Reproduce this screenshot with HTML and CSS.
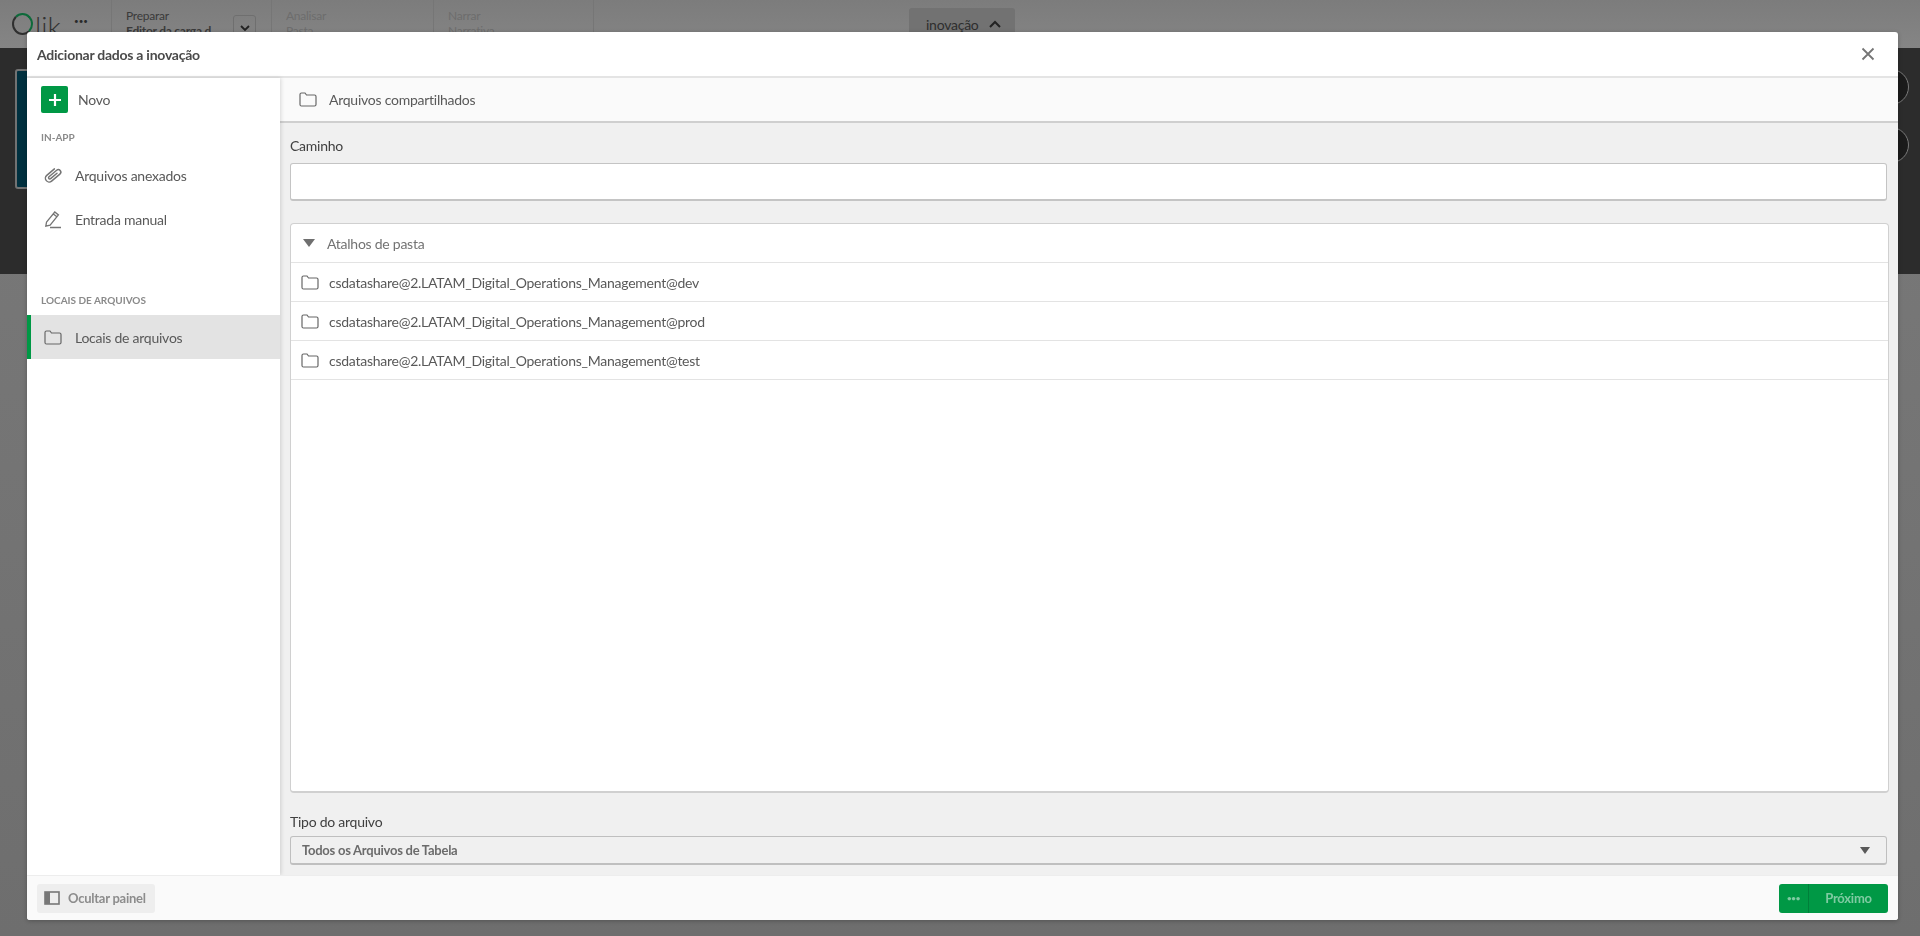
FILE: index.html
```html
<!DOCTYPE html>
<html lang="pt-BR">
<head>
<meta charset="utf-8">
<title>Adicionar dados a inovação</title>
<link rel="stylesheet" href="styles.css">
</head>
<body>
<div class="app">
  <header class="topbar">
    <div class="logo"><span class="logo-o"></span><span class="logo-lik">lik</span></div>
    <div class="more">•••</div>
    <div class="nav-item nav-prepare">
      <span class="nav-title">Preparar</span>
      <span class="nav-sub">Editor da carga d</span>
      <span class="nav-drop"><svg width="12" height="8" viewBox="0 0 12 8"><path d="M2 2l4 4 4-4" fill="none" stroke="#222" stroke-width="1.8"/></svg></span>
    </div>
    <div class="nav-item nav-analyse"><span class="nav-title faded">Analisar</span><span class="nav-sub faded">Pasta</span></div>
    <div class="nav-item nav-narrate"><span class="nav-title faded">Narrar</span><span class="nav-sub faded">Narrativa</span></div>
    <div class="app-name"><span>inovação</span><svg width="14" height="9" viewBox="0 0 14 9"><path d="M2 7l5-5 5 5" fill="none" stroke="#222" stroke-width="2"/></svg></div>
  </header>
  <section class="stage">
    <div class="stage-card"></div>
    <div class="stage-rings"><span class="ring"></span><span class="ring"></span></div>
  </section>
</div>

<div class="dialog">
  <div class="dialog-head">
    <h1 class="dialog-title">Adicionar dados a inovação</h1>
    <svg class="close" width="14" height="14" viewBox="0 0 14 14"><path d="M1.5 1.5l11 11M12.5 1.5l-11 11" stroke="#757575" stroke-width="1.8" fill="none"/></svg>
  </div>
  <div class="dialog-body">
    <aside class="side">
      <div class="new-row">
        <span class="new-btn"><svg width="14" height="14" viewBox="0 0 14 14"><path d="M7 1v12M1 7h12" stroke="#fff" stroke-width="2.2"/></svg></span>
        <span>Novo</span>
      </div>
      <div class="side-head side-head-app">IN-APP</div>
      <div class="side-item">
        <svg class="side-icon" width="20" height="20" viewBox="0 0 24 24"><g transform="rotate(-40 12 12) translate(1 6)"><path d="M16 7.500H6a1.500 1.500 0 0 1 0-3h12a3 3 0 0 1 0 6H5a4.500 4.500 0 0 1 0-9h12" fill="none" stroke="#757575" stroke-width="1.800" stroke-linecap="round"/></g></svg>
        <span>Arquivos anexados</span>
      </div>
      <div class="side-item">
        <svg class="side-icon" width="20" height="20" viewBox="0 0 20 20"><path d="M3.500 13.200L11.800 3l3.600 2.900-8.300 10.200-4.300 1.100zM10.300 4.900l3.600 2.900M7 18.500h11" fill="none" stroke="#757575" stroke-width="1.300"/></svg>
        <span>Entrada manual</span>
      </div>
      <div class="side-head side-head-files">LOCAIS DE ARQUIVOS</div>
      <div class="side-item side-active">
        <svg class="side-icon" width="18" height="15" viewBox="0 0 18 15"><path d="M1 2.500q0-1.500 1.500-1.500h3.500l1.500 2h8q1.500 0 1.500 1.500v8q0 1.500-1.500 1.500h-13q-1.500 0-1.500-1.500z" fill="none" stroke="#666" stroke-width="1.200"/></svg>
        <span>Locais de arquivos</span>
      </div>
    </aside>
    <main class="main">
      <div class="crumb">
        <svg width="18" height="15" viewBox="0 0 18 15"><path d="M1 2.500q0-1.500 1.500-1.500h3.500l1.500 2h8q1.500 0 1.500 1.500v8q0 1.500-1.500 1.500h-13q-1.500 0-1.500-1.500z" fill="none" stroke="#666" stroke-width="1.200"/></svg>
        <span>Arquivos compartilhados</span>
      </div>
      <div class="form">
        <label class="label label-path">Caminho</label>
        <div class="input"></div>
        <div class="panel">
          <div class="panel-head"><span class="tri"></span><span>Atalhos de pasta</span></div>
          <div class="row">
            <svg width="18" height="15" viewBox="0 0 18 15"><path d="M1 2.500q0-1.500 1.500-1.500h3.500l1.500 2h8q1.500 0 1.500 1.500v8q0 1.500-1.500 1.500h-13q-1.500 0-1.500-1.500z" fill="none" stroke="#666" stroke-width="1.200"/></svg>
            <span>csdatashare@2.LATAM_Digital_Operations_Management@dev</span>
          </div>
          <div class="row">
            <svg width="18" height="15" viewBox="0 0 18 15"><path d="M1 2.500q0-1.500 1.500-1.500h3.500l1.500 2h8q1.500 0 1.500 1.500v8q0 1.500-1.500 1.500h-13q-1.500 0-1.500-1.500z" fill="none" stroke="#666" stroke-width="1.200"/></svg>
            <span>csdatashare@2.LATAM_Digital_Operations_Management@prod</span>
          </div>
          <div class="row">
            <svg width="18" height="15" viewBox="0 0 18 15"><path d="M1 2.500q0-1.500 1.500-1.500h3.500l1.500 2h8q1.500 0 1.500 1.500v8q0 1.500-1.500 1.500h-13q-1.500 0-1.500-1.500z" fill="none" stroke="#666" stroke-width="1.200"/></svg>
            <span>csdatashare@2.LATAM_Digital_Operations_Management@test</span>
          </div>
        </div>
        <label class="label label-type">Tipo do arquivo</label>
        <div class="select"><span>Todos os Arquivos de Tabela</span><span class="tri tri-small"></span></div>
      </div>
    </main>
  </div>
  <footer class="dialog-foot">
    <div class="hide-btn">
      <svg width="16" height="14" viewBox="0 0 16 14"><rect x="1" y="1" width="14" height="12" fill="none" stroke="#777" stroke-width="1.600"/><rect x="1" y="1" width="5" height="12" fill="#777"/></svg>
      <span>Ocultar painel</span>
    </div>
    <div class="next-btn">
      <span class="next-more">•••</span>
      <span class="next-label">Próximo</span>
    </div>
  </footer>
</div>
</body>
</html>
```

FILE: styles.css
```css
* { box-sizing: border-box; }
html, body { margin: 0; height: 100%; }
body {
  font-family: "Lato", "Noto Sans", sans-serif;
  font-size: 14px;
  letter-spacing: -0.25px;
  color: #595959;
  overflow: hidden;
  background: linear-gradient(#7a7a7a, #6e6e6e);
}

/* Dimmed application behind the dialog */
.topbar {
  height: 48px;
  display: flex;
  background: linear-gradient(#7c7c7c, #858585);
  color: #3a3a3a;
  position: relative;
}
.logo { width: 74px; padding: 13px 0 0 12px; display: flex; align-items: flex-start; }
.logo-o { width: 21px; height: 22px; border: 2px solid #2f2f2f; border-top-color: #0d6a3a; border-right-color: #0d6a3a; border-radius: 50%; flex: none; }
.logo-lik { font-size: 28px; line-height: 26px; color: #333; margin-left: 2px; font-weight: 300; letter-spacing: 0; }
.more { width: 37px; padding-top: 16px; font-size: 8px; color: #2a2a2a; letter-spacing: 0; }
.nav-item {
  border-left: 1px solid #767676;
  padding: 8px 0 0 14px;
  display: flex;
  flex-direction: column;
  font-size: 12px;
  line-height: 15px;
  position: relative;
}
.nav-prepare { width: 160px; }
.nav-analyse { width: 162px; }
.nav-narrate { width: 161px; border-right: 1px solid #767676; }
.nav-sub { font-weight: 700; }
.nav-title.faded, .nav-sub.faded { color: #6d6d6d; font-weight: 400; }
.nav-drop {
  position: absolute;
  left: 121px;
  top: 15px;
  width: 23px;
  height: 26px;
  border: 1px solid #6f6f6f;
  border-radius: 3px;
  display: flex;
  align-items: center;
  justify-content: center;
}
.app-name {
  margin: 8px 0 0 315px;
  width: 106px;
  height: 32px;
  padding-left: 17px;
  background: #727272;
  border-radius: 3px;
  display: flex;
  align-items: flex-start;
  gap: 9px;
  font-size: 14px;
  line-height: 34px;
  color: #2e2e2e;
}
.app-name svg { margin-top: 12px; }
.stage {
  height: 226px;
  background: #2c2c2c;
  display: flex;
  justify-content: space-between;
  padding: 21px 11px 0 15px;
}
.stage-card { width: 40px; height: 120px; background: #00303f; border: 2px solid #727272; border-radius: 3px; }
.stage-rings { display: flex; flex-direction: column; gap: 22px; }
.ring { width: 36px; height: 36px; border-radius: 50%; background: #1b1b1b; border: 1px solid #7a7a7a; }

/* Dialog */
.dialog {
  position: fixed;
  left: 27px;
  top: 32px;
  width: 1871px;
  height: 888px;
  background: #fff;
  border-radius: 3px;
  display: flex;
  flex-direction: column;
  overflow: hidden;
  box-shadow: 0 1px 4px rgba(0, 0, 0, .25);
}
.dialog-head {
  height: 46px;
  flex: none;
  display: flex;
  align-items: center;
  justify-content: space-between;
  padding: 0 23px 0 10px;
  border-bottom: 2px solid #e4e4e4;
}
.dialog-title { margin: 0; font-size: 14px; font-weight: 700; color: #4a4a4a; }
.dialog-body { flex: 1; display: flex; min-height: 0; }
.side { width: 253px; flex: none; background: #fff; position: relative; box-shadow: 1px 0 4px rgba(0, 0, 0, .14); }
.new-row { padding: 8px 0 8px 14px; display: flex; align-items: center; gap: 10px; }
.new-btn {
  width: 27px;
  height: 27px;
  background: #009845;
  border-radius: 2px;
  display: flex;
  align-items: center;
  justify-content: center;
}
.side-head { font-size: 10px; font-weight: 700; color: #8a8a8a; padding-left: 14px; line-height: 12px; letter-spacing: 0; }
.side-head-app { margin-top: 10px; margin-bottom: 10px; }
.side-head-files { margin-top: 53px; margin-bottom: 9px; }
.side-item { height: 44px; display: flex; align-items: center; gap: 12px; padding-left: 16px; }
.side-active { background: #e3e3e3; border-left: 4px solid #009845; padding-left: 13px; gap: 13px; }
.side-icon { flex: none; }

.main {
  flex: 1;
  min-width: 0;
  display: flex;
  flex-direction: column;
  background: #f0f0f0;
}
.crumb {
  height: 45px;
  flex: none;
  display: flex;
  align-items: center;
  gap: 12px;
  padding-left: 19px;
  background: #fafafa;
  border-bottom: 2px solid #cfcfcf;
}
.form { flex: 1; padding: 14px 9px 10px 10px; display: flex; flex-direction: column; min-height: 0; }
.label { display: block; line-height: 18px; color: #404040; }
.label-path { margin-bottom: 8px; }
.input { height: 38px; width: 1597px; flex: none; background: #fff; border: 1px solid #c4c4c4; border-bottom-width: 2px; border-radius: 3px; }
.panel {
  margin-top: 22px;
  flex: 1;
  min-height: 0;
  background: #fff;
  border: 1px solid #d0d0d0;
  border-bottom-width: 2px;
  border-radius: 4px;
}
.panel-head {
  height: 39px;
  display: flex;
  align-items: center;
  gap: 12px;
  padding-left: 12px;
  color: #737373;
  border-bottom: 1px solid #e3e3e3;
}
.tri { width: 0; height: 0; border-left: 6px solid transparent; border-right: 6px solid transparent; border-top: 8px solid #6f6f6f; }
.tri-small { border-left-width: 5px; border-right-width: 5px; border-top-width: 7px; border-top-color: #595959; }
.row {
  height: 39px;
  display: flex;
  align-items: center;
  gap: 10px;
  padding-left: 10px;
  color: #595959;
  border-bottom: 1px solid #e3e3e3;
}
.label-type { margin-top: 20px; margin-bottom: 5px; }
.select {
  height: 29px;
  width: 1597px;
  flex: none;
  display: flex;
  align-items: center;
  justify-content: space-between;
  padding: 0 16px 0 11px;
  border: 1px solid #bfbfbf;
  border-bottom-width: 2px;
  border-radius: 3px;
  font-size: 13px;
  font-weight: 700;
  color: #6b6b6b;
}
.dialog-foot {
  height: 45px;
  flex: none;
  display: flex;
  align-items: center;
  justify-content: space-between;
  padding: 0 10px;
  background: #fafafa;
  border-top: 1px solid #ededed;
  position: relative;
}
.hide-btn {
  width: 118px;
  height: 29px;
  display: flex;
  align-items: center;
  gap: 8px;
  padding-left: 7px;
  background: #eeeeee;
  border-radius: 3px;
  font-size: 13px;
  font-weight: 700;
  color: #8c8c8c;
}
.next-btn { width: 109px; height: 29px; display: flex; background: #009845; border-radius: 3px; font-size: 13px; font-weight: 700; color: #7fcba2; }
.next-more { width: 30px; display: flex; align-items: center; justify-content: center; font-size: 8px; border-right: 1px solid #007f3a; }
.next-label { flex: 1; display: flex; align-items: center; justify-content: center; }
```
